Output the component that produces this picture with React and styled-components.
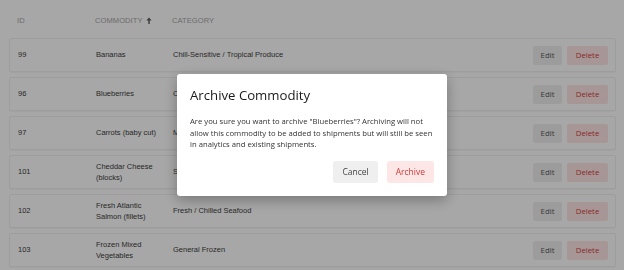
import React from "react";
import styled, { createGlobalStyle } from "styled-components";

const GlobalStyle = createGlobalStyle`
  html, body {
    margin: 0;
    padding: 0;
    background: #fff;
    overflow: hidden;
  }
  body {
    font-family: "Liberation Sans", Arial, sans-serif;
  }
`;

const commodities = [
  { id: 99, name: "Bananas", category: "Chill-Sensitive / Tropical Produce" },
  { id: 96, name: "Blueberries", category: "Chill-Sensitive / Berries" },
  { id: 97, name: "Carrots (baby cut)", category: "Mixed Vegetables" },
  { id: 101, name: "Cheddar Cheese (blocks)", category: "Standard Dairy" },
  { id: 102, name: "Fresh Atlantic Salmon (fillets)", category: "Fresh / Chilled Seafood" },
  { id: 103, name: "Frozen Mixed Vegetables", category: "General Frozen" },
];

const Page = styled.div`
  width: 624px;
  height: 270px;
  padding: 2px 8px 0 9px;
  box-sizing: border-box;
`;

const HeaderRow = styled.div`
  display: flex;
  align-items: center;
  height: 36px;
  padding: 0 8px;
`;

const HeadCell = styled.div`
  width: ${(p) => p.$w || "auto"};
  flex: ${(p) => (p.$w ? "none" : "1")};
  font-size: 7.5px;
  letter-spacing: 0.1px;
  color: #a6a6a6;
  text-transform: uppercase;
  display: flex;
  align-items: center;
  gap: 3px;
`;

const SortArrow = styled.svg`
  width: 6px;
  height: 7px;
  color: #5a5a5a;
`;

const Rows = styled.div`
  display: flex;
  flex-direction: column;
  gap: 5px;
`;

const Row = styled.div`
  display: flex;
  align-items: center;
  height: 34px;
  padding: 0 7px 0 8px;
  background: #fff;
  border: 1px solid #f0f0f0;
  border-radius: 2px;
  box-sizing: border-box;
  box-shadow: 0 1px 1px rgba(0, 0, 0, 0.03);
`;

const Cell = styled.div`
  width: ${(p) => p.$w || "auto"};
  flex: ${(p) => (p.$w ? "none" : "1")};
  padding-right: ${(p) => (p.$w ? "7px" : "0")};
  box-sizing: border-box;
  font-size: 7.5px;
  line-height: 11.3px;
  color: #3c3c3c;
`;

const Actions = styled.div`
  display: flex;
  gap: 5px;
`;

const SmallButton = styled.button`
  height: 19px;
  padding: 0 5px;
  border: none;
  border-radius: 2px;
  font-family: "Open Sans", sans-serif;
  font-size: 7.8px;
  background: ${(p) => (p.$danger ? "#fde6e6" : "#efefef")};
  color: ${(p) => (p.$danger ? "#d63a3a" : "#555")};
  min-width: ${(p) => (p.$danger ? "41px" : "29px")};
`;

const Overlay = styled.div`
  position: fixed;
  inset: 0;
  background: rgba(0, 0, 0, 0.345);
  display: flex;
  align-items: center;
  justify-content: center;
`;

const Modal = styled.div`
  width: 270px;
  box-sizing: border-box;
  padding: 13px;
  background: #fff;
  border-radius: 3px;
  box-shadow: 0 4px 14px rgba(0, 0, 0, 0.3);
  font-family: "Open Sans", sans-serif;
`;

const Title = styled.h2`
  margin: 0 0 12px;
  font-size: 13.2px;
  line-height: 17px;
  font-weight: 400;
  color: #1a1a1a;
`;

const Body = styled.p`
  margin: 0;
  font-size: 7.7px;
  line-height: 11.5px;
  color: #333;
`;

const Footer = styled.div`
  display: flex;
  justify-content: flex-end;
  gap: 9px;
  margin-top: 10px;
`;

const ModalButton = styled.button`
  height: 22px;
  padding: 0 9px;
  border: none;
  border-radius: 3px;
  font-family: "Open Sans", sans-serif;
  font-size: 8.5px;
  background: ${(p) => (p.$danger ? "#fde6e6" : "#efefef")};
  color: ${(p) => (p.$danger ? "#d23a3a" : "#444")};
`;

export default function App() {
  return (
    <>
      <GlobalStyle />
      <Page>
        <HeaderRow>
          <HeadCell $w="78px">ID</HeadCell>
          <HeadCell $w="77px">
            Commodity
            <SortArrow viewBox="0 0 6 7">
              <path d="M3 0.5 L5.6 3.4 L3.7 3.4 L3.7 7 L2.3 7 L2.3 3.4 L0.4 3.4 Z" fill="currentColor" />
            </SortArrow>
          </HeadCell>
          <HeadCell>Category</HeadCell>
        </HeaderRow>
        <Rows>
          {commodities.map((c) => (
            <Row key={c.id}>
              <Cell $w="78px">{c.id}</Cell>
              <Cell $w="77px">{c.name}</Cell>
              <Cell>{c.category}</Cell>
              <Actions>
                <SmallButton>Edit</SmallButton>
                <SmallButton $danger>Delete</SmallButton>
              </Actions>
            </Row>
          ))}
        </Rows>
      </Page>
      <Overlay>
        <Modal>
          <Title>Archive Commodity</Title>
          <Body>
            Are you sure you want to archive "Blueberries"? Archiving will not allow this commodity to be
            added to shipments but will still be seen in analytics and existing shipments.
          </Body>
          <Footer>
            <ModalButton>Cancel</ModalButton>
            <ModalButton $danger>Archive</ModalButton>
          </Footer>
        </Modal>
      </Overlay>
    </>
  );
}
